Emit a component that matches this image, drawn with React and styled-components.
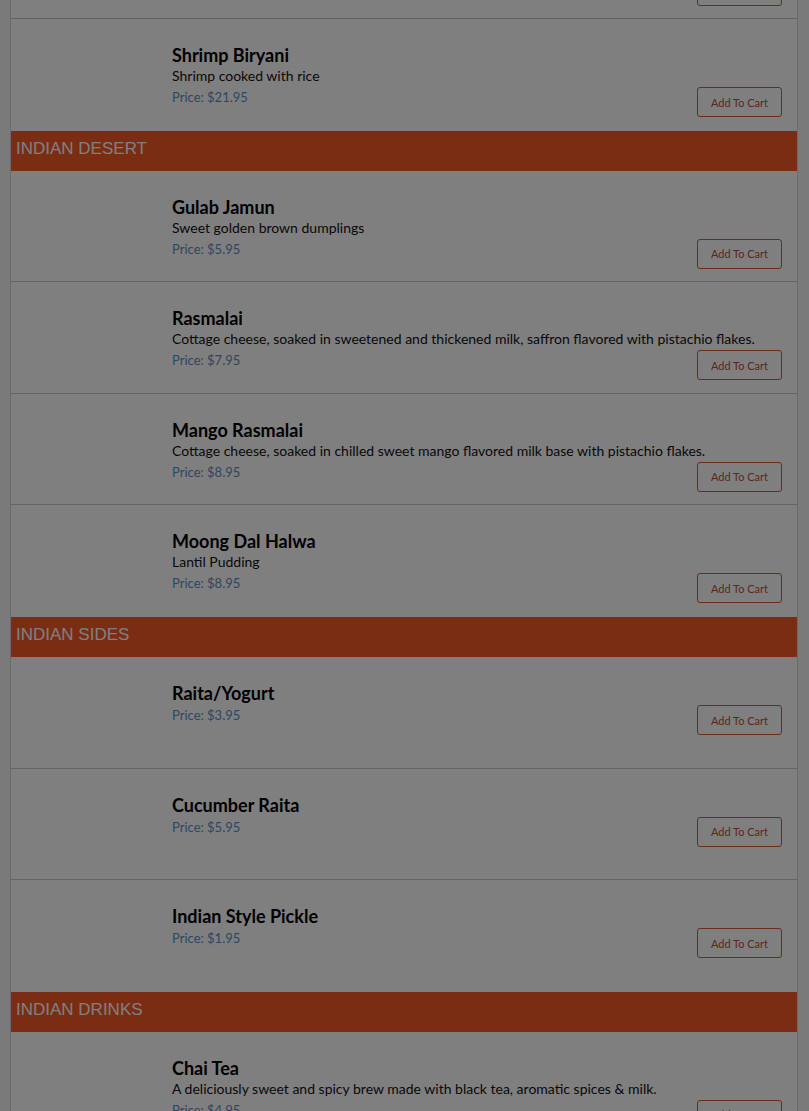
import React from "react";
import styled, { createGlobalStyle } from "styled-components";

const menu = [
  {
    category: null,
    items: [
      { name: "Lamb Biryani", desc: "Lamb cooked with rice", price: "19.95" },
      { name: "Shrimp Biryani", desc: "Shrimp cooked with rice", price: "21.95" },
    ],
  },
  {
    category: "INDIAN DESERT",
    items: [
      { name: "Gulab Jamun", desc: "Sweet golden brown dumplings", price: "5.95" },
      {
        name: "Rasmalai",
        desc: "Cottage cheese, soaked in sweetened and thickened milk, saffron flavored with pistachio flakes.",
        price: "7.95",
      },
      {
        name: "Mango Rasmalai",
        desc: "Cottage cheese, soaked in chilled sweet mango flavored milk base with pistachio flakes.",
        price: "8.95",
      },
      { name: "Moong Dal Halwa", desc: "Lantil Pudding", price: "8.95" },
    ],
  },
  {
    category: "INDIAN SIDES",
    items: [
      { name: "Raita/Yogurt", price: "3.95" },
      { name: "Cucumber Raita", price: "5.95" },
      { name: "Indian Style Pickle", price: "1.95" },
    ],
  },
  {
    category: "INDIAN DRINKS",
    items: [
      {
        name: "Chai Tea",
        desc: "A deliciously sweet and spicy brew made with black tea, aromatic spices & milk.",
        price: "4.95",
      },
      { name: "Mango Lassi", desc: "Yogurt drink blended with mango", price: "4.95" },
    ],
  },
];

function App() {
  return (
    <>
      <GlobalStyle />
      <Page>
        <Container>
          {menu.map((section, i) => (
            <Section key={i}>
              {section.category && <CategoryBar>{section.category}</CategoryBar>}
              {section.items.map((item) => (
                <ItemRow key={item.name}>
                  <Thumb />
                  <ItemInfo>
                    <ItemName>{item.name}</ItemName>
                    {item.desc && <ItemDesc>{item.desc}</ItemDesc>}
                    <PriceRow>
                      <Price>Price: ${item.price}</Price>
                      <CartButton>Add To Cart</CartButton>
                    </PriceRow>
                  </ItemInfo>
                </ItemRow>
              ))}
            </Section>
          ))}
        </Container>
      </Page>
      <Backdrop />
    </>
  );
}

export default App;

const GlobalStyle = createGlobalStyle`
  html, body {
    margin: 0;
    padding: 0;
    background: #f4f4f4;
    overflow: hidden;
  }
  * {
    box-sizing: border-box;
  }
`;

const Page = styled.div`
  height: 1111px;
  overflow: hidden;
`;

const Container = styled.div`
  margin: -92.5px 11px 0 10px;
  background: #fff;
  border-left: 1px solid #d6d6d6;
  border-right: 1px solid #d6d6d6;
`;

const Section = styled.div``;

const CategoryBar = styled.div`
  height: 40px;
  background: #f45a25;
  color: #fff;
  font-family: "Liberation Sans", Arial, sans-serif;
  font-size: 17px;
  line-height: 35px;
  padding-left: 5px;
`;

const ItemRow = styled.div`
  display: flex;
  height: 111.6px;
  padding: 26px 15px 0 10px;
  border-bottom: 1px solid #c8c8c8;
  background: #fff;
  font-family: Lato, "Open Sans", sans-serif;

  &:last-child {
    border-bottom: none;
  }
`;

const Thumb = styled.div`
  width: 151px;
  flex-shrink: 0;
`;

const ItemInfo = styled.div`
  flex: 1;
`;

const ItemName = styled.div`
  font-size: 18px;
  font-weight: 700;
  line-height: 21px;
  color: #000;
`;

const ItemDesc = styled.div`
  font-size: 14px;
  line-height: 20px;
  color: #111;
`;

const PriceRow = styled.div`
  display: flex;
  justify-content: space-between;
  align-items: flex-start;
`;

const Price = styled.div`
  font-size: 13px;
  line-height: 22px;
  color: #5b8ec4;
`;

const CartButton = styled.button`
  width: 85px;
  height: 30px;
  margin-top: 1px;
  background: transparent;
  border: 1px solid #d9583a;
  border-radius: 3px;
  color: #b84e3a;
  font-family: Lato, "Open Sans", sans-serif;
  font-size: 11px;
  padding: 0;
  cursor: pointer;
`;

const Backdrop = styled.div`
  position: fixed;
  inset: 0;
  background: rgba(0, 0, 0, 0.5);
`;
